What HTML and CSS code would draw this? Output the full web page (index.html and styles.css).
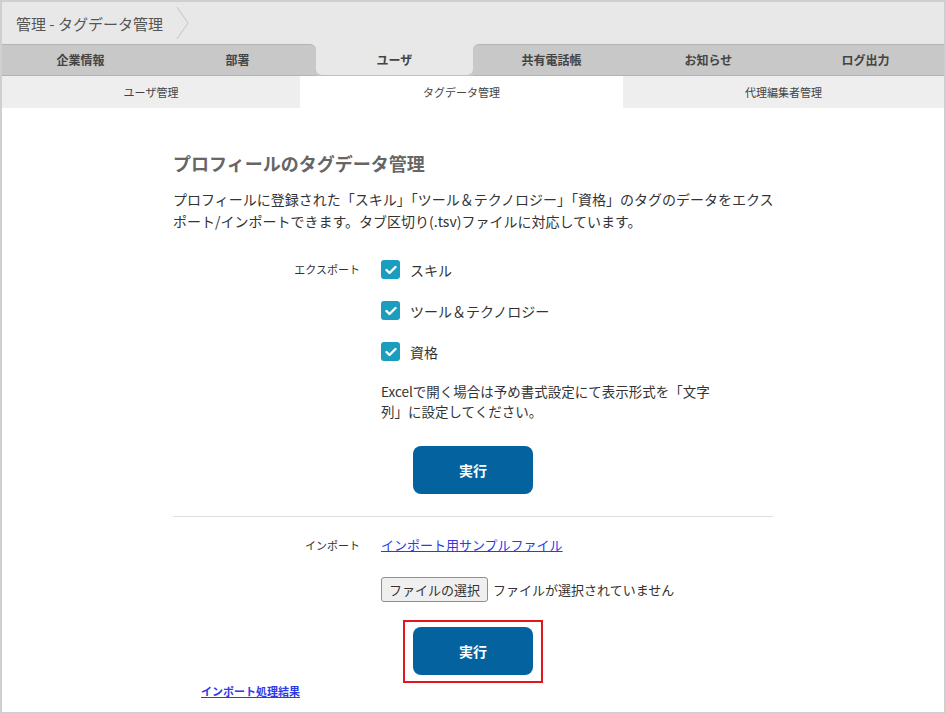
FILE: index.html
```html
<!DOCTYPE html>
<html lang="ja">
  <head>
    <meta charset="UTF-8" />
    <meta name="viewport" content="width=device-width, initial-scale=1.0" />
    <title>管理 - タグデータ管理</title>
    <link rel="stylesheet" href="styles.css">
  </head>
  <body>
    <div class="page">
      <header class="breadcrumb">
        <span class="breadcrumb__text">管理 - タグデータ管理</span>
        <svg class="breadcrumb__chevron" width="14" height="32" viewBox="0 0 14 32">
          <polyline points="1,0 12,16 1,32" fill="none" stroke="#c4c4c4" stroke-width="1" />
        </svg>
      </header>

      <nav class="main-tabs">
        <ul class="main-tabs__list">
          <li class="main-tabs__item">企業情報</li>
          <li class="main-tabs__item main-tabs__item--before">部署</li>
          <li class="main-tabs__item main-tabs__item--active">ユーザ</li>
          <li class="main-tabs__item main-tabs__item--after">共有電話帳</li>
          <li class="main-tabs__item">お知らせ</li>
          <li class="main-tabs__item">ログ出力</li>
        </ul>
      </nav>

      <nav class="sub-tabs">
        <div class="sub-tabs__item">ユーザ管理</div>
        <div class="sub-tabs__item sub-tabs__item--active">タグデータ管理</div>
        <div class="sub-tabs__item">代理編集者管理</div>
      </nav>

      <main class="content">
        <h2 class="content__title">プロフィールのタグデータ管理</h2>
        <p class="content__desc">
          プロフィールに登録された「スキル」「ツール＆テクノロジー」「資格」のタグのデータをエクスポート/インポートできます。タブ区切り(.tsv)ファイルに対応しています。
        </p>

        <!-- export -->
        <div class="form-row">
          <div class="form-row__label form-row__label--tall">エクスポート</div>
          <div class="form-row__body">
            <label class="check">
              <span class="check__box">
                <svg width="12" height="10" viewBox="0 0 12 10"><polyline points="1.5,5 4.5,8 10.5,2" fill="none" stroke="#fff" stroke-width="2.4" stroke-linecap="round" stroke-linejoin="round" /></svg>
              </span>
              スキル
            </label>
            <label class="check">
              <span class="check__box">
                <svg width="12" height="10" viewBox="0 0 12 10"><polyline points="1.5,5 4.5,8 10.5,2" fill="none" stroke="#fff" stroke-width="2.4" stroke-linecap="round" stroke-linejoin="round" /></svg>
              </span>
              ツール＆テクノロジー
            </label>
            <label class="check">
              <span class="check__box">
                <svg width="12" height="10" viewBox="0 0 12 10"><polyline points="1.5,5 4.5,8 10.5,2" fill="none" stroke="#fff" stroke-width="2.4" stroke-linecap="round" stroke-linejoin="round" /></svg>
              </span>
              資格
            </label>
            <p class="note">Excelで開く場合は予め書式設定にて表示形式を「文字列」に設定してください。</p>
          </div>
        </div>

        <div class="actions actions--export">
          <button class="run-btn">実行</button>
        </div>

        <hr class="divider" />

        <!-- import -->
        <div class="form-row form-row--import">
          <div class="form-row__label">インポート</div>
          <div class="form-row__body">
            <a class="link" href="#">インポート用サンプルファイル</a>
            <div class="file-pick">
              <button class="file-pick__btn">ファイルの選択</button>
              <span class="file-pick__text">ファイルが選択されていません</span>
            </div>
          </div>
        </div>

        <div class="actions actions--import">
          <div class="highlight">
            <button class="run-btn">実行</button>
          </div>
        </div>

        <a class="result-link" href="#">インポート処理結果</a>
      </main>
    </div>
  </body>
</html>
```

FILE: styles.css
```css
body {
  margin: 0;
  padding: 0;
  font-family: "Noto Sans CJK JP", "Noto Sans", sans-serif;
  background-color: #fff;
  color: #333;
}

.page {
  width: 946px;
  height: 714px;
  box-sizing: border-box;
  border: 2px solid #cfcfcf;
  overflow: hidden;
  background-color: #fff;
}

/* breadcrumb */
.breadcrumb {
  height: 42px;
  background-color: #e8e8e8;
  display: flex;
  align-items: center;
  padding-left: 14px;
}

.breadcrumb__text {
  font-size: 15px;
  color: #555;
}

.breadcrumb__chevron {
  margin-left: 13px;
}

/* main tabs */
.main-tabs {
  background: linear-gradient(#e8e8e8 50%, #c8c8c8 50%);
}

.main-tabs__list {
  list-style: none;
  margin: 0;
  padding: 0;
  display: flex;
}

.main-tabs__item {
  flex: 1;
  height: 30px;
  line-height: 30px;
  text-align: center;
  font-size: 12px;
  font-weight: bold;
  color: #444;
  background-color: #c8c8c8;
  border-top: 1px solid #b3b3b3;
  border-bottom: 1px solid #b3b3b3;
}

.main-tabs__item--before {
  border-top-right-radius: 6px;
}

.main-tabs__item--after {
  border-top-left-radius: 6px;
}

.main-tabs__item--active {
  background-color: #e8e8e8;
  border-top-color: transparent;
  border-bottom-color: #c0c0c0;
  border-radius: 0 0 6px 6px;
}

/* sub tabs */
.sub-tabs {
  display: grid;
  grid-template-columns: 298px 323px 1fr;
  height: 32px;
}

.sub-tabs__item {
  background-color: #eeeeee;
  font-size: 11px;
  color: #444;
  text-align: center;
  line-height: 32px;
}

.sub-tabs__item--active {
  background-color: #fff;
}

/* content */
.content {
  width: 600px;
  margin: 0 auto;
  padding-top: 41px;
}

.content__title {
  margin: 0;
  font-size: 18px;
  line-height: 28px;
  color: #666;
}

.content__desc {
  margin: 11px -8px 0 0;
  font-size: 14px;
  line-height: 22px;
  color: #333;
}

.form-row {
  display: flex;
  margin-top: 17px;
}

.form-row__label {
  width: 208px;
  padding-right: 21px;
  box-sizing: border-box;
  text-align: right;
  font-size: 11px;
  color: #333;
  line-height: 20px;
  flex-shrink: 0;
}

.form-row__label--tall {
  line-height: 41px;
}

.form-row__body {
  flex: 1;
}

.check {
  display: flex;
  align-items: center;
  height: 41px;
  font-size: 14px;
  color: #333;
}

.check__box {
  width: 19px;
  height: 19px;
  border-radius: 3px;
  background-color: #1b9dbe;
  display: flex;
  align-items: center;
  justify-content: center;
  margin-right: 10px;
}

.note {
  margin: 9px 0 0;
  width: 340px;
  font-size: 13.5px;
  line-height: 20px;
  color: #333;
}

.actions {
  display: flex;
  justify-content: center;
}

.actions--export {
  margin-top: 25px;
}

.run-btn {
  width: 120px;
  height: 48px;
  border: none;
  border-radius: 8px;
  background-color: #04639f;
  color: #fff;
  font-family: inherit;
  font-size: 14px;
  font-weight: bold;
  cursor: pointer;
}

.divider {
  border: none;
  border-top: 1px solid #dddddd;
  margin: 22px 0 0;
}

.form-row--import {
  margin-top: 18px;
}

.link {
  display: inline-block;
  font-size: 13px;
  line-height: 20px;
  vertical-align: top;
  color: #3039e6;
  text-decoration: underline;
}

.file-pick {
  margin-top: 18px;
  display: flex;
  align-items: center;
}

.file-pick__btn {
  height: 25px;
  padding: 0 7px;
  font-family: inherit;
  font-size: 13px;
  color: #333;
  background-color: #efefef;
  border: 1px solid #8f8f8f;
  border-radius: 3px;
}

.file-pick__text {
  margin-left: 5px;
  font-size: 13px;
  color: #333;
}

.actions--import {
  margin-top: 18px;
}

.highlight {
  border: 2px solid #e3161d;
  padding: 5px 8px 6px;
}

.highlight .run-btn {
  display: block;
}

.result-link {
  display: block;
  margin: 0 0 0 28px;
  font-size: 11px;
  font-weight: bold;
  line-height: 16px;
  color: #3039e6;
  text-decoration: underline;
}
```
